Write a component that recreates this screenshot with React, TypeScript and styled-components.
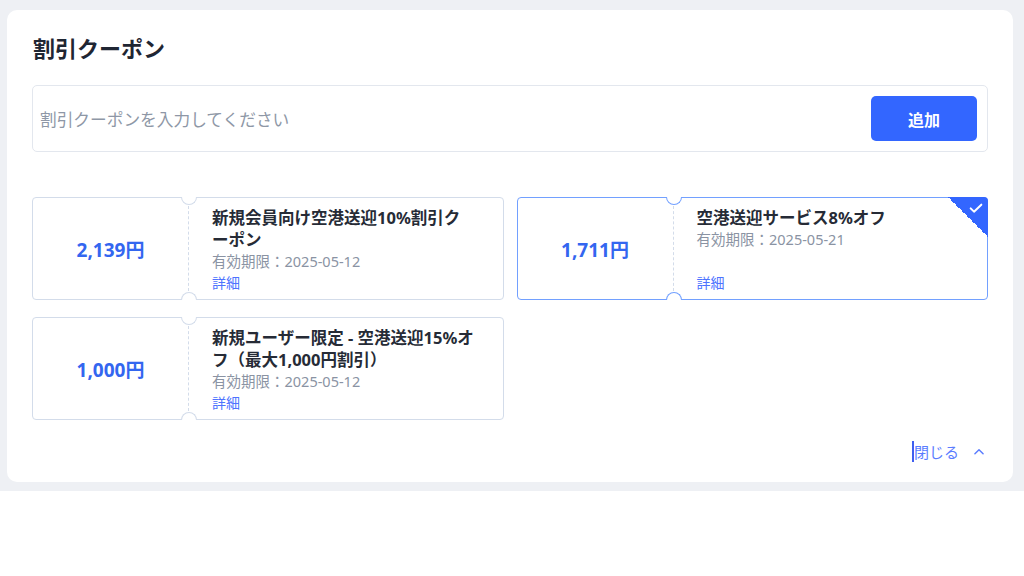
import React from "react";
import styled, { createGlobalStyle, css } from "styled-components";

const GlobalStyle = createGlobalStyle`
  body {
    margin: 0;
    background: #ffffff;
    font-family: "Noto Sans", "Noto Sans CJK JP", sans-serif;
  }
`;

const Backdrop = styled.div`
  background: #eef0f4;
  padding: 10px 11px 9px 7px;
`;

const Panel = styled.section`
  background: #ffffff;
  border-radius: 10px;
  padding: 20px 25px 19px 25px;
`;

const Title = styled.h2`
  margin: 0 0 21px 1px;
  font-family: "Noto Sans CJK JP", sans-serif;
  font-size: 22px;
  line-height: 34px;
  font-weight: 700;
  color: #1f2633;
`;

const InputRow = styled.div`
  display: flex;
  align-items: center;
  gap: 12px;
  border: 1px solid #e3e7ee;
  border-radius: 5px;
  padding: 10px 10px 10px 7px;
`;

const CodeInput = styled.input`
  flex: 1;
  padding: 0;
  border: none;
  outline: none;
  font-family: "Noto Sans CJK JP", sans-serif;
  font-size: 16.7px;
  color: #1f2633;
  background: transparent;
  &::placeholder {
    color: #8e97a6;
  }
`;

const AddButton = styled.button`
  width: 106px;
  height: 45px;
  border: none;
  border-radius: 5px;
  background: #3366ff;
  color: #ffffff;
  font-family: "Noto Sans CJK JP", sans-serif;
  font-size: 16px;
  font-weight: 700;
`;

const CouponGrid = styled.div`
  display: grid;
  grid-template-columns: 1fr 1fr;
  column-gap: 13px;
  row-gap: 17px;
  margin-top: 45px;
`;

const Coupon = styled.div<{ $selected?: boolean }>`
  position: relative;
  display: flex;
  min-height: 101px;
  border: 1px solid #d3dcea;
  border-radius: 4px;
  background: #ffffff;
  ${(p) =>
    p.$selected &&
    css`
      border-color: #72a0ff;
    `}
`;

const Notch = styled.span<{ $side: "top" | "bottom"; $selected?: boolean }>`
  position: absolute;
  left: 148px;
  width: 14px;
  height: 7px;
  background: #ffffff;
  border: 1px solid ${(p) => (p.$selected ? "#72a0ff" : "#d3dcea")};
  ${(p) =>
    p.$side === "top"
      ? "top: -1px; border-top: none; border-radius: 0 0 8px 8px;"
      : "bottom: -1px; border-bottom: none; border-radius: 8px 8px 0 0;"}
`;

const Stub = styled.div`
  width: 155px;
  flex: none;
  display: flex;
  align-items: center;
  justify-content: center;
  border-right: 1px dashed #d3dcea;
  margin: 8px 0;
`;

const Amount = styled.span`
  font-size: 19px;
  font-weight: 700;
  color: #3366f0;
`;

const Body = styled.div`
  flex: 1;
  display: flex;
  flex-direction: column;
  padding: 9px 27px 7px 23px;
`;

const CouponName = styled.div`
  font-size: 16.5px;
  line-height: 22px;
  font-weight: 700;
  color: #262b36;
`;

const Expiry = styled.div`
  font-size: 14.5px;
  line-height: 21px;
  color: #8a93a3;
`;

const Detail = styled.a`
  margin-top: auto;
  font-family: "Noto Sans CJK JP", sans-serif;
  font-size: 14px;
  line-height: 20px;
  color: #4d73ff;
  text-decoration: none;
`;

const Corner = styled.span`
  position: absolute;
  top: -1px;
  right: -1px;
  width: 40px;
  height: 40px;
  border-top-right-radius: 4px;
  background: linear-gradient(to bottom left, #3366ff 50%, transparent 50%);
  svg {
    position: absolute;
    top: 3px;
    right: 4px;
  }
`;

const Footer = styled.div`
  display: flex;
  justify-content: flex-end;
  margin-top: 21px;
`;

const CloseToggle = styled.button`
  display: flex;
  align-items: center;
  gap: 13px;
  border: none;
  background: transparent;
  padding: 0 2px 0 0;
  font-family: "Noto Sans CJK JP", sans-serif;
  font-size: 15px;
  line-height: 22px;
  color: #5b7dff;
`;

const Caret = styled.span`
  border-left: 2px solid #3f5ff0;
`;

const coupons = [
  { id: "c1", amount: "2,139円", name: "新規会員向け空港送迎10%割引クーポン", expiry: "2025-05-12", selected: false },
  { id: "c2", amount: "1,711円", name: "空港送迎サービス8%オフ", expiry: "2025-05-21", selected: true },
  { id: "c3", amount: "1,000円", name: "新規ユーザー限定 - 空港送迎15%オフ（最大1,000円割引）", expiry: "2025-05-12", selected: false },
];

export default function App() {
  return (
    <>
      <GlobalStyle />
      <Backdrop>
        <Panel>
          <Title>割引クーポン</Title>
          <InputRow>
            <CodeInput placeholder="割引クーポンを入力してください" />
            <AddButton>追加</AddButton>
          </InputRow>
          <CouponGrid>
            {coupons.map((c) => (
              <Coupon key={c.id} $selected={c.selected}>
                <Stub>
                  <Amount>{c.amount}</Amount>
                </Stub>
                <Body>
                  <CouponName>{c.name}</CouponName>
                  <Expiry>有効期限：{c.expiry}</Expiry>
                  <Detail href="#">詳細</Detail>
                </Body>
                <Notch $side="top" $selected={c.selected} />
                <Notch $side="bottom" $selected={c.selected} />
                {c.selected && (
                  <Corner>
                    <svg width="16" height="16" viewBox="0 0 24 24" fill="none" stroke="#fff" strokeWidth="3" strokeLinecap="round" strokeLinejoin="round">
                      <path d="M4 12.5l5 5L20 7" />
                    </svg>
                  </Corner>
                )}
              </Coupon>
            ))}
          </CouponGrid>
          <Footer>
            <CloseToggle>
              <span>
                <Caret />
                閉じる
              </span>
              <svg width="14" height="14" viewBox="0 0 24 24" fill="none" stroke="#5b7dff" strokeWidth="2.5" strokeLinecap="round" strokeLinejoin="round">
                <path d="M5 15l7-7 7 7" />
              </svg>
            </CloseToggle>
          </Footer>
        </Panel>
      </Backdrop>
    </>
  );
}
